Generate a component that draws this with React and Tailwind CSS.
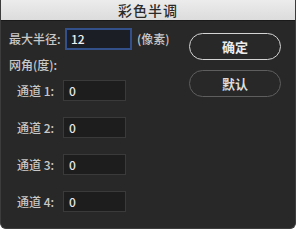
import React from "react";

function ChannelRow({ n }) {
  return (
    <div className="flex items-center h-[21px] pl-[8px]">
      <span className="w-[46px] text-[12px] font-medium text-[#c8c8c8]">通道 {n}:</span>
      <div className="w-[63px] h-[21px] bg-[#1d1d1d] border border-[#3a3a3a] flex items-center pl-[5px] text-[12px] font-medium text-[#e8e8e8]">
        0
      </div>
    </div>
  );
}

export default function App() {
  return (
    <div
      className="w-[296px] h-[229px] flex flex-col bg-[#282828] overflow-hidden rounded-b-[6px] border-x border-b border-[#3c3c3c]"
      style={{ fontFamily: '"Noto Sans CJK SC", "Liberation Sans", sans-serif' }}
    >
      {/* Title bar */}
      <div className="h-[21px] shrink-0 bg-gradient-to-b from-[#ececec] to-[#dcdcdc] border-b border-[#1a1a1a] flex items-center justify-center -mx-px">
        <span className="text-[14px] font-medium text-[#2a2a2a] tracking-[1px] leading-none">彩色半调</span>
      </div>

      <div className="flex flex-1">
        {/* Left side */}
        <div className="flex flex-col pl-[8px] pt-[7px] w-[188px]">
          <div className="flex items-center h-[22px]">
            <span className="w-[56px] text-[12px] font-medium text-[#c8c8c8]">最大半径:</span>
            <div className="w-[67px] h-[22px] bg-[#1c1e26] border-2 border-[#34508a] flex items-center pl-[4px] text-[12px] font-medium text-[#f0f0f0]">
              12
            </div>
            <span className="ml-[5px] text-[12px] font-medium text-[#c8c8c8]">(像素)</span>
          </div>
          <div className="mt-[7px] h-[16px] flex items-center text-[12px] font-medium text-[#c8c8c8]">网角(度):</div>
          <div className="mt-[7px] flex flex-col gap-[16px]">
            <ChannelRow n={1} />
            <ChannelRow n={2} />
            <ChannelRow n={3} />
            <ChannelRow n={4} />
          </div>
        </div>

        {/* Right side */}
        <div className="flex flex-col pt-[12px] gap-[10px]">
          <button className="w-[92px] h-[27px] rounded-full border-[1.5px] border-[#d4d4d4] text-[13px] font-bold text-[#ececec] flex items-center justify-center">
            确定
          </button>
          <button className="w-[92px] h-[27px] rounded-full border-[1.5px] border-[#5e5e5e] text-[13px] font-bold text-[#dcdcdc] flex items-center justify-center">
            默认
          </button>
        </div>
      </div>
    </div>
  );
}
